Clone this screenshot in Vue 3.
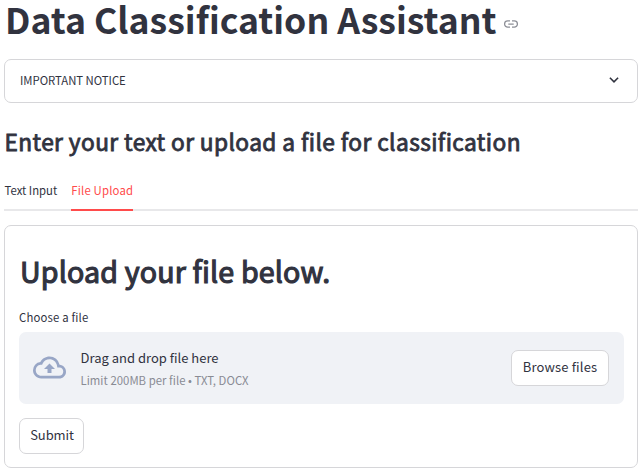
<script setup>
const tabs = [
  { label: 'Text Input', active: false },
  { label: 'File Upload', active: true },
]
</script>

<template>
  <main class="page">
    <header class="title-row">
      <h1>Data Classification Assistant</h1>
      <svg class="link" viewBox="0 0 14 8" width="14" height="8" fill="none" stroke="#8c8e96" stroke-width="1.25">
        <path d="M6 .9H3.7a3.1 3.1 0 0 0 0 6.2H6M8 .9h2.3a3.1 3.1 0 0 1 0 6.2H8M4.3 4h5.4" />
      </svg>
    </header>

    <section class="expander">
      <span class="notice">IMPORTANT NOTICE</span>
      <svg viewBox="0 0 10 6" width="10" height="6" fill="none" stroke="#31333f" stroke-width="1.6">
        <path d="M.9.8 5 4.8 9.1.8" />
      </svg>
    </section>

    <h3>Enter your text or upload a file for classification</h3>

    <nav class="tabs">
      <button v-for="t in tabs" :key="t.label" class="tab" :class="{ active: t.active }">{{ t.label }}</button>
    </nav>

    <form class="form" @submit.prevent>
      <h2>Upload your file below.</h2>
      <label>Choose a file</label>
      <div class="dropzone">
        <svg class="cloud" viewBox="0 0 24 24" width="33" height="33" fill="#98a6c6">
          <path d="M19.35 10.04A7.49 7.49 0 0 0 12 4C9.11 4 6.6 5.64 5.35 8.04A5.994 5.994 0 0 0 0 14c0 3.31 2.69 6 6 6h13c2.76 0 5-2.24 5-5 0-2.64-2.05-4.78-4.65-4.96zM19 18H6c-2.21 0-4-1.79-4-4 0-2.05 1.53-3.76 3.56-3.97l1.07-.11.5-.95A5.469 5.469 0 0 1 12 6c2.62 0 4.88 1.86 5.39 4.43l.3 1.5 1.53.11A2.98 2.98 0 0 1 22 15c0 1.65-1.35 3-3 3zM8 13h2.55v3h2.9v-3H16l-4-4z" />
        </svg>
        <div class="hint">
          <span class="drag">Drag and drop file here</span>
          <small>Limit 200MB per file • TXT, DOCX</small>
        </div>
        <button type="button" class="btn browse">Browse files</button>
      </div>
      <button class="btn submit">Submit</button>
    </form>
  </main>
</template>

<style>
body {
  background: #fff;
}
</style>

<style scoped>
.page {
  box-sizing: border-box;
  height: 473px;
  padding: 0 5px 0 4px;
  color: #31333f;
  font-family: "Noto Sans CJK JP", "Noto Sans", sans-serif;
  font-size: 11.35px;
}
h1, h2, h3 {
  margin: 0;
  white-space: nowrap;
}
.title-row {
  display: flex;
  align-items: flex-start;
  gap: 7px;
  height: 59px;
  padding-left: 1px;
}
h1 {
  font-size: 35.6px;
  line-height: 37px;
  font-weight: 700;
}
.link {
  margin-top: 20px;
}
.expander {
  box-sizing: border-box;
  display: flex;
  align-items: center;
  justify-content: space-between;
  height: 44px;
  padding: 0 18px 2px 15px;
  border: 1px solid #d6d6d9;
  border-radius: 7px;
}
.notice {
  line-height: 16px;
  letter-spacing: -0.03px;
}
h3 {
  margin-top: 24px;
  padding-left: 0.5px;
  font-size: 22.7px;
  line-height: 30px;
  font-weight: 400;
  letter-spacing: 0.41px;
  -webkit-text-stroke: 0.85px #31333f;
}
.tabs {
  display: flex;
  gap: 14px;
  height: 36px;
  margin-top: 16px;
  border-bottom: 2px solid #e8e8ea;
}
.tab {
  height: 38px;
  padding: 0 0 1px;
  border: 0;
  border-bottom: 2px solid transparent;
  background: none;
  color: inherit;
  font: inherit;
  line-height: 33px;
}
.tab:first-child {
  padding-left: 0.5px;
}
.tab.active {
  border-color: #ff4b4b;
  color: #ff4b4b;
  letter-spacing: 0.18px;
}
.form {
  box-sizing: border-box;
  display: flex;
  flex-direction: column;
  height: 243px;
  margin-top: 14px;
  padding: 25px 14px 0;
  border: 1px solid #d6d6d9;
  border-radius: 7px;
}
h2 {
  padding-left: 1px;
  font-size: 28.6px;
  line-height: 40px;
  font-weight: 400;
  letter-spacing: 0.17px;
  -webkit-text-stroke: 1.15px #31333f;
}
label {
  height: 24px;
  margin-top: 17px;
  line-height: 19px;
  letter-spacing: 0.17px;
}
.dropzone {
  box-sizing: border-box;
  display: flex;
  align-items: center;
  width: 605px;
  height: 72px;
  padding: 0 15px 0 14px;
  border-radius: 7px;
  background: #f0f2f6;
}
.cloud {
  margin-bottom: 1px;
}
.hint {
  display: flex;
  flex-direction: column;
  flex: 1;
  align-items: flex-start;
  margin-left: 14.5px;
}
.drag {
  font-size: 13px;
  line-height: 24px;
}
small {
  color: #898b94;
  font-size: 11.35px;
  line-height: 20px;
  letter-spacing: 0.03px;
}
.btn {
  box-sizing: border-box;
  height: 36px;
  padding: 0 0 3px;
  border: 1px solid #d6d6d9;
  border-radius: 7px;
  background: #fff;
  color: inherit;
  font: inherit;
  font-size: 13px;
}
.browse {
  width: 98px;
  letter-spacing: 0.15px;
}
.submit {
  width: 65px;
  margin-top: 14px;
  padding-left: 1px;
  letter-spacing: -0.1px;
}
</style>
